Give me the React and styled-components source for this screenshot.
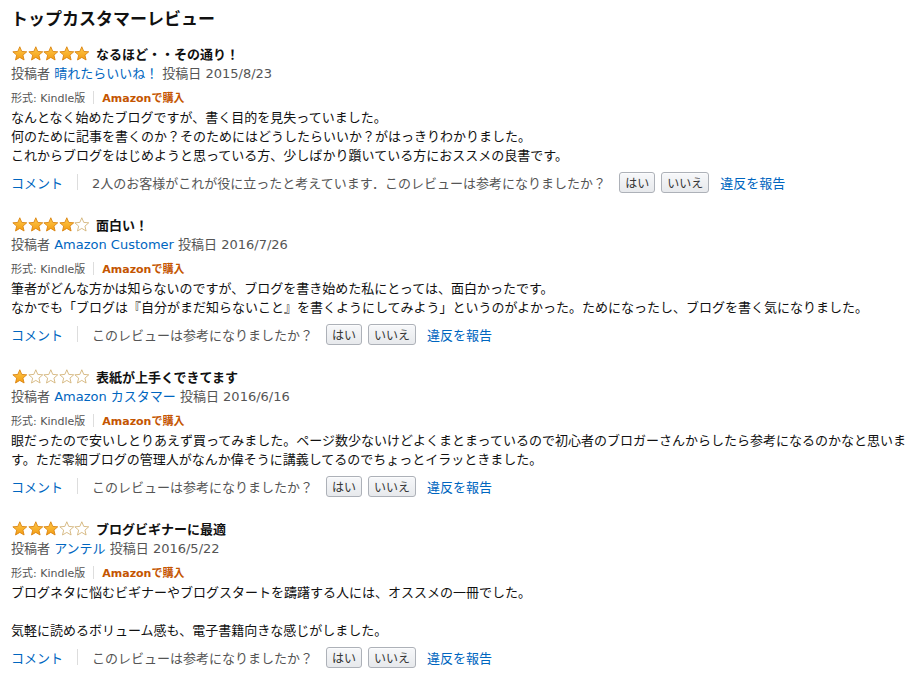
import React from 'react';
import styled, { createGlobalStyle } from 'styled-components';

const reviews = [
  {
    rating: 5,
    title: 'なるほど・・その通り！',
    author: '晴れたらいいね！',
    date: '2015/8/23',
    body: 'なんとなく始めたブログですが、書く目的を見失っていました。\n何のために記事を書くのか？そのためにはどうしたらいいか？がはっきりわかりました。\nこれからブログをはじめようと思っている方、少しばかり躓いている方におススメの良書です。',
    helpful: '2人のお客様がこれが役に立ったと考えています．このレビューは参考になりましたか？',
  },
  {
    rating: 4,
    title: '面白い！',
    author: 'Amazon Customer',
    date: '2016/7/26',
    body: '筆者がどんな方かは知らないのですが、ブログを書き始めた私にとっては、面白かったです。\nなかでも「ブログは『自分がまだ知らないこと』を書くようにしてみよう」というのがよかった。ためになったし、ブログを書く気になりました。',
    helpful: 'このレビューは参考になりましたか？',
  },
  {
    rating: 1,
    title: '表紙が上手くできてます',
    author: 'Amazon カスタマー',
    date: '2016/6/16',
    body: '眼だったので安いしとりあえず買ってみました。ページ数少ないけどよくまとまっているので初心者のブロガーさんからしたら参考になるのかなと思います。ただ零細ブログの管理人がなんか偉そうに講義してるのでちょっとイラッときました。',
    helpful: 'このレビューは参考になりましたか？',
  },
  {
    rating: 3,
    title: 'ブログビギナーに最適',
    author: 'アンテル',
    date: '2016/5/22',
    body: 'ブログネタに悩むビギナーやブログスタートを躊躇する人には、オススメの一冊でした。\n\n気軽に読めるボリューム感も、電子書籍向きな感じがしました。',
    helpful: 'このレビューは参考になりましたか？',
  },
];

const STAR_PATH =
  'M8 0.8 L10 5.55 L15.13 5.98 L11.23 9.35 L12.41 14.37 L8 11.7 L3.59 14.37 L4.77 9.35 L0.87 5.98 L6 5.55 Z';

const Star = ({ filled }) => (
  <StarIcon viewBox="0 0 16 15.4">
    <defs>
      <linearGradient id="starFill" x1="0" y1="0" x2="0" y2="1">
        <stop offset="0" stopColor="#ffc94a" />
        <stop offset="1" stopColor="#f39c12" />
      </linearGradient>
    </defs>
    <path
      d={STAR_PATH}
      fill={filled ? 'url(#starFill)' : '#fff'}
      stroke={filled ? '#d9820f' : '#d2b277'}
      strokeWidth="0.9"
      strokeLinejoin="round"
    />
  </StarIcon>
);

const Stars = ({ rating }) => (
  <StarRow>
    {[1, 2, 3, 4, 5].map((n) => (
      <Star key={n} filled={n <= rating} />
    ))}
  </StarRow>
);

const Review = ({ review }) => (
  <ReviewItem>
    <ReviewHeader>
      <Stars rating={review.rating} />
      <ReviewTitle>{review.title}</ReviewTitle>
    </ReviewHeader>
    <Byline>
      投稿者 <Link>{review.author}</Link> 投稿日 {review.date}
    </Byline>
    <FormatLine>
      形式: Kindle版
      <Divider $h={13} $gap={8} />
      <BuyLink>Amazonで購入</BuyLink>
    </FormatLine>
    <Body>{review.body}</Body>
    <Actions>
      <Link>コメント</Link>
      <Divider $h={16} $gap={14} />
      <Helpful>{review.helpful}</Helpful>
      <VoteGroup>
        <VoteButton>はい</VoteButton>
        <VoteButton>いいえ</VoteButton>
      </VoteGroup>
      <Link>違反を報告</Link>
    </Actions>
  </ReviewItem>
);

const App = () => (
  <>
    <GlobalStyle />
    <Page>
      <Heading>トップカスタマーレビュー</Heading>
      <ReviewList>
        {reviews.map((r) => (
          <Review key={r.date} review={r} />
        ))}
      </ReviewList>
    </Page>
  </>
);

const GlobalStyle = createGlobalStyle`
  body {
    margin: 0;
    background: #fff;
    color: #111;
    font-family: "DejaVu Sans", "Noto Sans CJK JP", sans-serif;
  }
`;

const Page = styled.div`
  width: 900px;
  padding: 6px 11px;
`;

const Heading = styled.h2`
  margin: 0 0 14px;
  font-family: "Noto Sans CJK JP", sans-serif;
  font-size: 17px;
  font-weight: 700;
  line-height: 24px;
  color: #111;
`;

const ReviewList = styled.div`
  display: flex;
  flex-direction: column;
  gap: 21px;
`;

const ReviewItem = styled.div`
  display: flex;
  flex-direction: column;
`;

const ReviewHeader = styled.div`
  display: flex;
  align-items: center;
  height: 19px;
  gap: 6px;
`;

const StarRow = styled.span`
  display: inline-flex;
  margin-left: 1px;
`;

const StarIcon = styled.svg`
  width: 15.6px;
  height: 15px;
  display: block;
`;

const ReviewTitle = styled.span`
  font-family: "Noto Sans CJK JP", sans-serif;
  font-size: 13px;
  font-weight: 700;
  color: #111;
`;

const Byline = styled.div`
  margin-top: 1px;
  font-size: 13px;
  line-height: 20px;
  color: #555;
`;

const Link = styled.a`
  color: #0066c0;
  cursor: pointer;
`;

const FormatLine = styled.div`
  display: flex;
  align-items: center;
  margin-top: 5px;
  height: 16px;
  font-size: 11px;
  color: #555;
`;

const Divider = styled.span`
  display: inline-block;
  width: 1px;
  height: ${(p) => p.$h}px;
  margin: 0 ${(p) => p.$gap}px;
  background: #ddd;
`;

const BuyLink = styled.span`
  font-weight: 700;
  color: #c45500;
`;

const Body = styled.div`
  margin-top: 3px;
  font-size: 13px;
  line-height: 19px;
  color: #111;
  white-space: pre-line;
`;

const Actions = styled.div`
  display: flex;
  align-items: center;
  height: 24px;
  margin-top: 5px;
  font-size: 13px;
`;

const Helpful = styled.span`
  color: #555;
`;

const VoteGroup = styled.span`
  display: inline-flex;
  gap: 6px;
  margin: 0 11px 0 13px;
`;

const VoteButton = styled.button`
  height: 21px;
  padding: 0 5px;
  font-family: "Noto Sans CJK JP", sans-serif;
  font-size: 12px;
  line-height: 19px;
  color: #333;
  background: linear-gradient(to bottom, #f7f8fa, #e7e9ec);
  border: 1px solid #adb1b8;
  border-radius: 3px;
  box-shadow: inset 0 1px 0 rgba(255, 255, 255, 0.6);
  cursor: pointer;
`;

export default App;
